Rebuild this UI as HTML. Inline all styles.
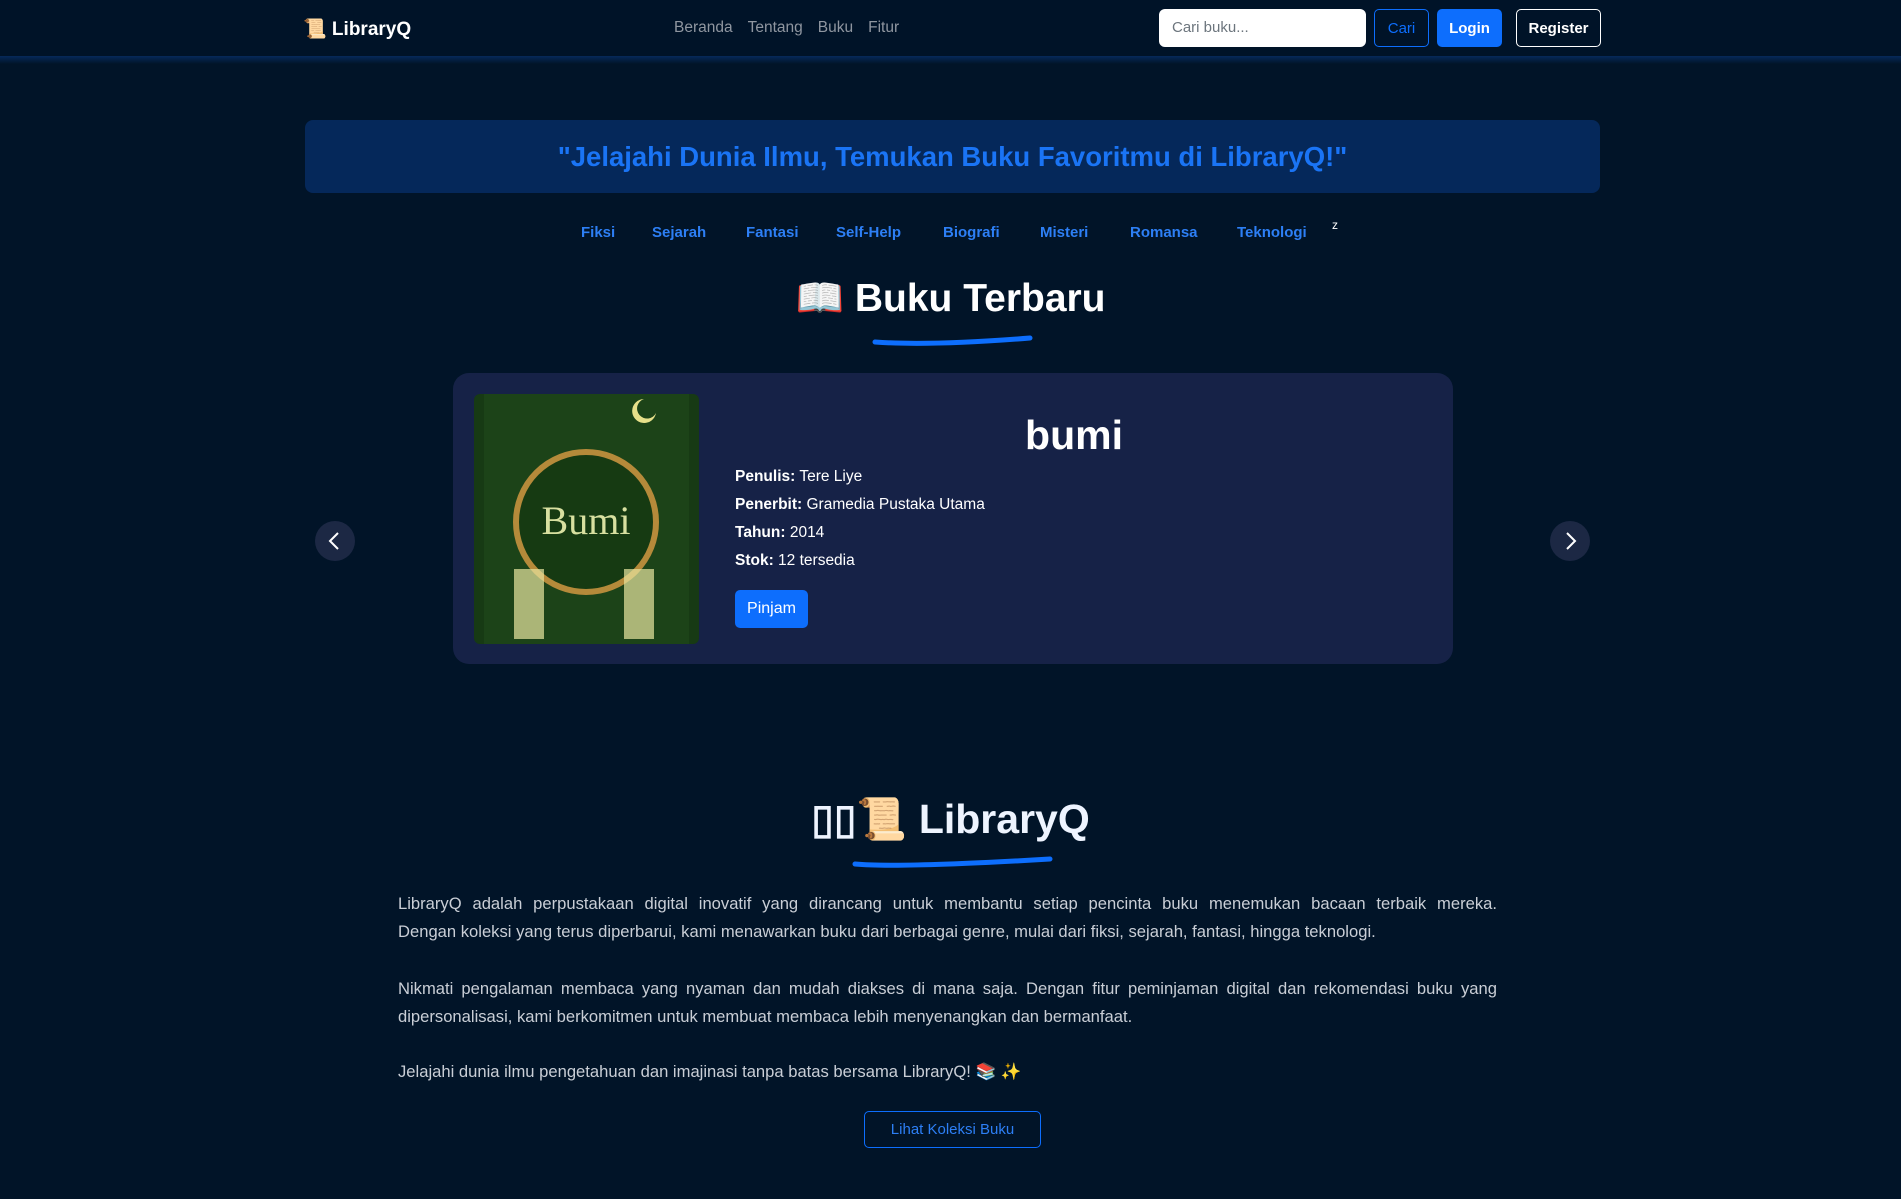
<!DOCTYPE html>
<html><head><meta charset="utf-8"><style>
*{box-sizing:border-box;margin:0;padding:0}
body{width:1901px;height:1199px;background:#011428;font-family:"Liberation Sans","Noto Sans CJK SC",sans-serif;color:#fff;position:relative;overflow:hidden}
.nav{position:absolute;left:0;top:0;width:1901px;height:56px;background:#001328}
.strip{position:absolute;left:0;top:56px;width:1901px;height:8px;background:linear-gradient(#06295a,#011428)}
.abs{position:absolute}
.links a{color:#8f96a0;font-size:15.5px;margin-right:15px;text-decoration:none}
.btn{position:absolute;border-radius:5px;font-size:15px;display:flex;align-items:center;justify-content:center;font-weight:bold}
.cat{position:absolute;top:224px;color:#2d7ff5;font-size:15px;font-weight:bold}
.det{position:absolute;left:735px;font-size:15.5px;color:#fff}
.p{position:absolute;left:398px;width:1099px;font-size:16.6px;line-height:28px;color:#c9ced6;text-align:justify}
</style></head><body>
<div class="nav"></div><div class="strip"></div>
<div class="abs" style="left:303px;top:17px;font-size:19px;font-weight:bold">📜 LibraryQ</div>
<div class="abs links" style="left:674px;top:19px"><a>Beranda</a><a>Tentang</a><a>Buku</a><a>Fitur</a></div>
<div class="abs" style="left:1159px;top:9px;width:207px;height:38px;background:#fff;border-radius:6px;color:#6c757d;font-size:15px;padding:10px 13px">Cari buku...</div>
<div class="btn" style="left:1374px;top:9px;width:55px;height:38px;border:1px solid #0d6efd;color:#0d6efd;font-weight:normal">Cari</div>
<div class="btn" style="left:1437px;top:9px;width:65px;height:38px;background:#0d6efd">Login</div>
<div class="btn" style="left:1516px;top:9px;width:85px;height:38px;border:1.5px solid #fff">Register</div>

<div class="abs" style="left:305px;top:120px;width:1295px;height:73px;background:#05285a;border-radius:8px;display:flex;align-items:center;justify-content:center;color:#1a74f5;font-size:27.5px;font-weight:bold">"Jelajahi Dunia Ilmu, Temukan Buku Favoritmu di LibraryQ!"</div>

<div class="cat" style="left:581px">Fiksi</div>
<div class="cat" style="left:652px">Sejarah</div>
<div class="cat" style="left:746px">Fantasi</div>
<div class="cat" style="left:836px">Self-Help</div>
<div class="cat" style="left:943px">Biografi</div>
<div class="cat" style="left:1040px">Misteri</div>
<div class="cat" style="left:1130px">Romansa</div>
<div class="cat" style="left:1237px">Teknologi</div>
<div class="abs" style="left:1332px;top:218px;font-size:12px">z</div>

<div class="abs" style="left:0;width:1901px;top:275px;text-align:center;font-size:39px;font-weight:bold">📖 Buku Terbaru</div>
<svg class="abs" style="left:870px;top:332px" width="166" height="16"><path d="M5 10 Q60 14 160 6" stroke="#0d6efd" stroke-width="5" fill="none" stroke-linecap="round"/></svg>

<div class="abs" style="left:453px;top:373px;width:1000px;height:291px;background:#162247;border-radius:16px"></div>
<svg class="abs" style="left:474px;top:394px" width="225" height="250"><rect width="225" height="250" rx="6" fill="#173a14"/><rect x="10" y="0" width="205" height="250" fill="#1f4a1a" opacity=".6"/><circle cx="112" cy="128" r="70" fill="#163a12" stroke="#b58a3a" stroke-width="6"/><path d="M170 5 a12 12 0 1 0 12 14 a10 10 0 1 1 -12 -14" fill="#e6e08a"/><text x="112" y="140" text-anchor="middle" font-family="Liberation Serif" font-size="40" fill="#d8e0a0">Bumi</text><rect x="40" y="175" width="30" height="70" fill="#e8e6a0" opacity=".7"/><rect x="150" y="175" width="30" height="70" fill="#e8e6a0" opacity=".7"/></svg>
<div class="abs" style="left:1000px;width:148px;top:412px;text-align:center;font-size:41px;font-weight:bold">bumi</div>
<div class="det" style="top:468px"><b>Penulis:</b> Tere Liye</div>
<div class="det" style="top:496px"><b>Penerbit:</b> Gramedia Pustaka Utama</div>
<div class="det" style="top:524px"><b>Tahun:</b> 2014</div>
<div class="det" style="top:552px"><b>Stok:</b> 12 tersedia</div>
<div class="btn" style="left:735px;top:590px;width:73px;height:38px;background:#0d6efd;font-weight:normal;font-size:16px">Pinjam</div>

<svg class="abs" style="left:315px;top:521px" width="40" height="40"><circle cx="20" cy="20" r="20" fill="#1c2844"/><path d="M23 12 L15 20 L23 28" stroke="#fff" stroke-width="2" fill="none"/></svg>
<svg class="abs" style="left:1550px;top:521px" width="40" height="40"><circle cx="20" cy="20" r="20" fill="#1c2844"/><path d="M17 12 L25 20 L17 28" stroke="#fff" stroke-width="2" fill="none"/></svg>

<div class="abs" style="left:0;width:1901px;top:795px;text-align:center;font-size:41px;font-weight:bold;color:#eef4ff">▯▯📜 LibraryQ</div>
<svg class="abs" style="left:850px;top:854px" width="205" height="16"><path d="M5 10 Q50 14 200 5" stroke="#0d6efd" stroke-width="5" fill="none" stroke-linecap="round"/></svg>

<div class="p" style="top:890px;text-align-last:justify">LibraryQ adalah perpustakaan digital inovatif yang dirancang untuk membantu setiap pencinta buku menemukan bacaan terbaik mereka.</div>
<div class="p" style="top:918px">Dengan koleksi yang terus diperbarui, kami menawarkan buku dari berbagai genre, mulai dari fiksi, sejarah, fantasi, hingga teknologi.</div>
<div class="p" style="top:975px">Nikmati pengalaman membaca yang nyaman dan mudah diakses di mana saja. Dengan fitur peminjaman digital dan rekomendasi buku yang dipersonalisasi, kami berkomitmen untuk membuat membaca lebih menyenangkan dan bermanfaat.</div>
<div class="p" style="top:1058px">Jelajahi dunia ilmu pengetahuan dan imajinasi tanpa batas bersama LibraryQ! 📚 ✨</div>
<div class="btn" style="left:864px;top:1111px;width:177px;height:37px;border:1.5px solid #0d6efd;color:#2d7ff5;font-weight:normal">Lihat Koleksi Buku</div>
</body></html>
